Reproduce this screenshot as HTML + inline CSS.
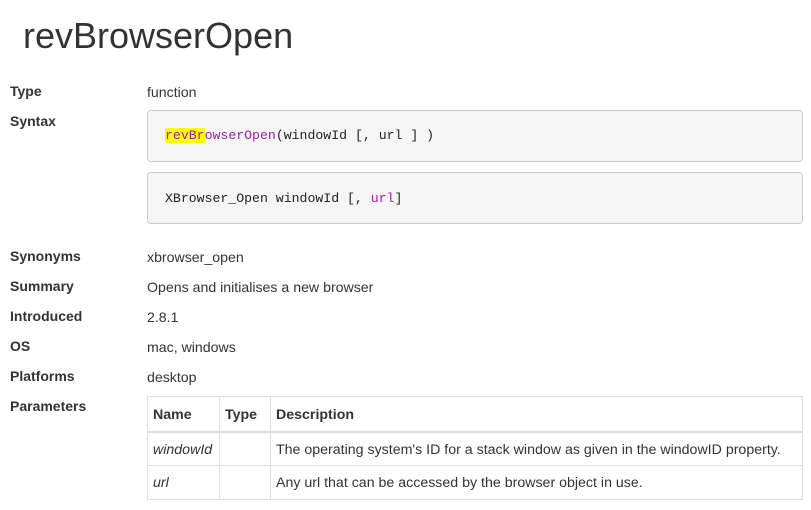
<!DOCTYPE html>
<html><head><meta charset="utf-8"><style>
body{margin:0;width:811px;height:510px;background:#fff;font-family:"Liberation Sans",sans-serif;color:#333;position:relative;overflow:hidden}
h1{position:absolute;left:23px;top:15px;margin:0;font-size:36px;font-weight:normal;line-height:42px;color:#333}
.l{position:absolute;left:10px;font-weight:bold;font-size:14px}
.v{position:absolute;left:147px;font-size:14.15px}
.box{position:absolute;left:147px;width:656px;height:52px;background:#f5f5f5;border:1px solid #ccc;border-radius:4px;box-sizing:border-box}
.code{position:absolute;left:17px;top:18px;font-family:"Liberation Mono",monospace;font-size:13.2px;color:#222;white-space:nowrap}
.p{color:#a020a0}
.hl{background:#ff0;color:#a020a0}
table{position:absolute;left:147px;top:396px;width:656px;border-collapse:collapse;font-size:14.2px}
td,th{border:1px solid #ddd;padding:3px 5px 0;text-align:left;box-sizing:border-box}
th{height:35px;border-bottom:2px solid #ddd}
td{height:34px}
</style></head><body>
<h1>revBrowserOpen</h1>
<div class="l" style="top:83px">Type</div><div class="v" style="top:84px">function</div>
<div class="l" style="top:113px">Syntax</div>
<div class="box" style="top:110px"><div class="code" style="top:17px"><span class="hl">revBr</span><span class="p">owserOpen</span>(windowId [, url ] )</div></div>
<div class="box" style="top:172px"><div class="code"><span>XBrowser_Open windowId [, </span><span class="p">url</span>]</div></div>
<div class="l" style="top:248px">Synonyms</div><div class="v" style="top:249px">xbrowser_open</div>
<div class="l" style="top:278px">Summary</div><div class="v" style="top:279px">Opens and initialises a new browser</div>
<div class="l" style="top:308px">Introduced</div><div class="v" style="top:309px">2.8.1</div>
<div class="l" style="top:338px">OS</div><div class="v" style="top:339px">mac, windows</div>
<div class="l" style="top:368px">Platforms</div><div class="v" style="top:369px">desktop</div>
<div class="l" style="top:398px">Parameters</div>
<table>
<tr><th style="width:72px">Name</th><th style="width:51px">Type</th><th>Description</th></tr>
<tr><td><i>windowId</i></td><td></td><td>The operating system's ID for a stack window as given in the windowID property.</td></tr>
<tr><td style="height:30px;padding-top:1px"><i>url</i></td><td></td><td style="padding-top:1px">Any url that can be accessed by the browser object in use.</td></tr>
</table>
</body></html>
